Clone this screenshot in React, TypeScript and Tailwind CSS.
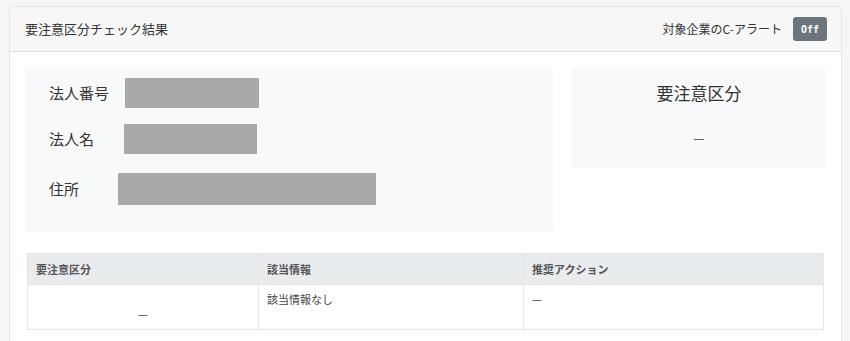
const FONT = "font-['Noto_Sans_CJK_JP','Noto_Sans',sans-serif]";

const INFO_ROWS = [
  { label: '法人番号', row: 'mt-[11px]', bar: 'ml-[16px] w-[134px] h-[30px]' },
  { label: '法人名', row: 'mt-[16px]', bar: 'ml-[15px] w-[133px] h-[30px]' },
  { label: '住所', row: 'mt-[19px]', bar: 'ml-[9px] w-[258px] h-[32px]' },
];

export default function App() {
  return (
    <div className={`min-h-[341px] bg-[#f5f6f8] pl-[9px] pt-[6px] text-[#333] ${FONT}`}>
      <div className="w-[833px] rounded-t-[4px] border border-[#e3e4e6] bg-white">
        {/* Header */}
        <div className="flex h-[45px] items-center justify-between border-b border-[#dfe0e2] bg-[#f7f7f7] pl-[15px] pr-[14px]">
          <h2 className="text-[13px] text-[#333]">要注意区分チェック結果</h2>
          <div className="flex items-center gap-[11px]">
            <span className="text-[12px] text-[#333]">対象企業のC-アラート</span>
            <button className="flex h-[24px] w-[34px] items-center justify-center rounded-[3px] bg-[#6c757d] font-['DejaVu_Sans_Mono',monospace] text-[10px] font-bold text-white">
              Off
            </button>
          </div>
        </div>

        {/* Body */}
        <div className="px-[15px] pt-[15px] pb-[12px]">
          <div className="flex items-start gap-[19px]">
            <div className="flex h-[165px] w-[528px] flex-col rounded-[3px] bg-[#f8f9fa] pl-[24px]">
              {INFO_ROWS.map((r) => (
                <div key={r.label} className={`flex items-center ${r.row}`}>
                  <span className="w-[60px] shrink-0 whitespace-nowrap text-[15px] text-[#333]">{r.label}</span>
                  <div className={`${r.bar} bg-[#a8a9ab]`} />
                </div>
              ))}
            </div>
            <div className="flex h-[101px] w-[254px] flex-col items-center rounded-[3px] bg-[#f8f9fa] pt-[13px]">
              <div className="text-[17px] text-[#333]">要注意区分</div>
              <div className="mt-[33px] h-px w-[10px] bg-[#666]" />
            </div>
          </div>

          {/* Table */}
          <table className="mx-[2px] mt-[21px] w-[797px] border-collapse text-[11px]">
            <thead>
              <tr className="h-[31px] bg-[#e9ecef] text-left text-[#555]">
                <th className="w-[231px] border border-[#e4e6e9] px-[8px] font-bold">要注意区分</th>
                <th className="w-[265px] border border-[#e4e6e9] px-[8px] font-bold">該当情報</th>
                <th className="border border-[#e4e6e9] px-[8px] font-bold">推奨アクション</th>
              </tr>
            </thead>
            <tbody>
              <tr className="h-[45px] text-[#444]">
                <td className="border border-[#e4e6e9] px-[8px] pt-[21px] text-center align-top">—</td>
                <td className="border border-[#e4e6e9] px-[8px] pt-[6px] align-top">該当情報なし</td>
                <td className="border border-[#e4e6e9] px-[8px] pt-[6px] align-top">—</td>
              </tr>
            </tbody>
          </table>
        </div>
      </div>
    </div>
  );
}
